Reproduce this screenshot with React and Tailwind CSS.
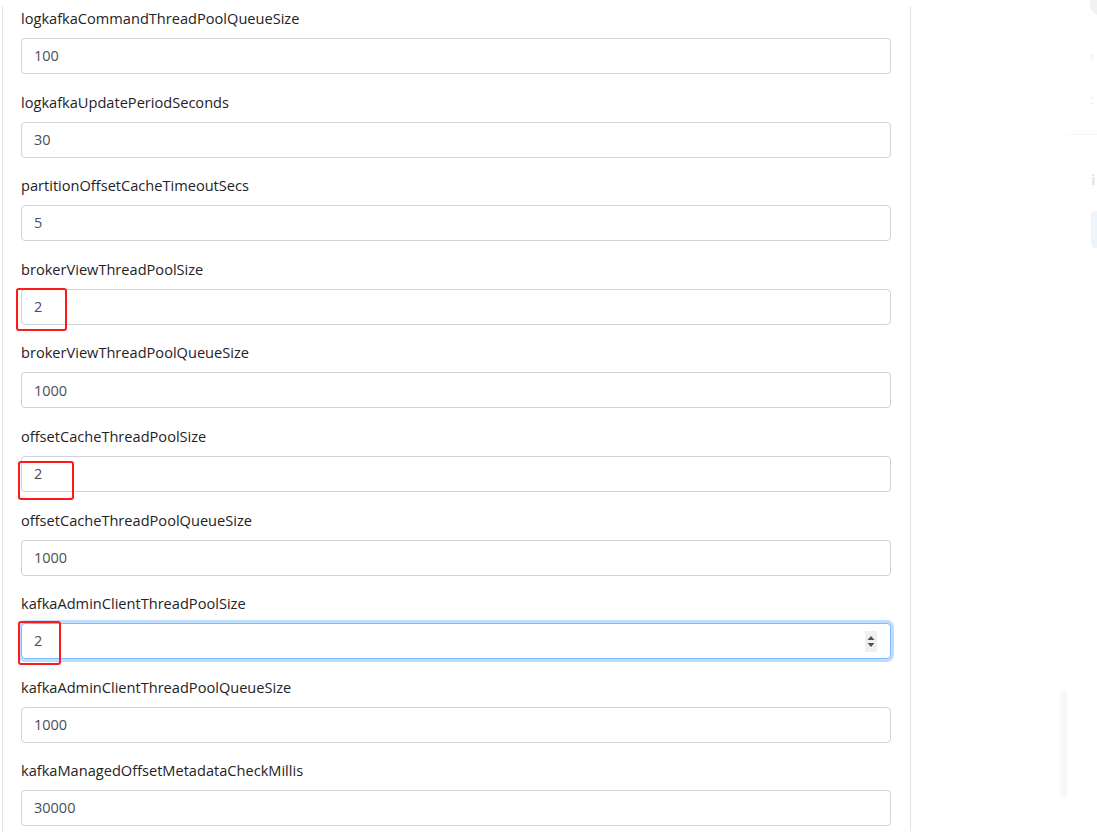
import React from 'react'

const fields = [
  { label: 'logkafkaCommandThreadPoolQueueSize', value: '100' },
  { label: 'logkafkaUpdatePeriodSeconds', value: '30' },
  { label: 'partitionOffsetCacheTimeoutSecs', value: '5' },
  { label: 'brokerViewThreadPoolSize', value: '2', mark: 'left-[-5px] top-[-1px] w-[51px] h-[43px]' },
  { label: 'brokerViewThreadPoolQueueSize', value: '1000' },
  { label: 'offsetCacheThreadPoolSize', value: '2', mark: 'left-[-3px] top-[5px] w-[56px] h-[39px]' },
  { label: 'offsetCacheThreadPoolQueueSize', value: '1000' },
  { label: 'kafkaAdminClientThreadPoolSize', value: '2', mark: 'left-[-3px] top-[-2px] w-[43px] h-[44px]', focus: true },
  { label: 'kafkaAdminClientThreadPoolQueueSize', value: '1000' },
  { label: 'kafkaManagedOffsetMetadataCheckMillis', value: '30000' },
]

const Field = ({ label, value, mark, focus }) => (
  <div className="mb-[15.6px]">
    <label className="block mb-2 h-6 leading-6 text-[14.6px] text-[#1f2326]">{label}</label>
    <div className="relative">
      <div
        className={
          focus
            ? 'h-9 rounded-[4px] border border-[#80bdff] shadow-[0_0_0_3px_rgba(0,123,255,0.25)] bg-white flex items-center px-3 text-[14.5px] text-[#495057]'
            : 'h-9 rounded-[4px] border border-[#ced4da] bg-white flex items-center px-3 text-[14.5px] text-[#495057]'
        }
      >
        <span className="flex-1">{value}</span>
        {focus && (
          <span className="w-3 h-[21px] bg-[#f0f0f0] flex items-center justify-center mr-[1px]">
            <svg width="8" height="13" viewBox="0 0 8 13">
              <path d="M4 1 L7.5 5 L0.5 5 Z" fill="#505050" />
              <path d="M4 12 L7.5 8 L0.5 8 Z" fill="#505050" />
            </svg>
          </span>
        )}
      </div>
      {mark && <div className={`absolute border-2 border-[#ff1a1a] rounded-[3px] ${mark}`} />}
    </div>
  </div>
)

export default function App() {
  return (
    <div className="w-[1097px] h-[833px] overflow-hidden bg-white flex" style={{ fontFamily: '"Open Sans", "Noto Sans", sans-serif' }}>
      <div className="w-[911px] shrink-0 pt-[8px] pl-[2px]">
        <div className="h-full border-l border-r border-[#e3e3e3] pl-[18px] pr-[19px]">
          <div className="-mt-[2px]">
            {fields.map((f) => (
              <Field key={f.label} {...f} />
            ))}
          </div>
        </div>
      </div>
      <div className="flex-1 flex">
        <div className="w-[150px] shrink-0 flex flex-col justify-end pb-[36px] pl-[149px]">
          <div className="w-[7px] h-[107px] rounded bg-[#f7f7f7] shrink-0" />
        </div>
        <div className="flex-1 border-l border-[#fbfbfb] flex flex-col">
          <div className="pl-[28px] flex flex-col items-start text-[#ececec]">
            <div className="w-6 h-[16px] rounded-b-full bg-[#f2f2f2]" />
            <div className="mt-[30px] text-[14px] leading-5">‹</div>
            <div className="mt-[24px] text-[12px] leading-5">:</div>
          </div>
          <div className="mt-[24px] ml-[4px] h-px bg-[#f6f6f6]" />
          <div className="pl-[29px] flex flex-col items-start">
            <div className="mt-[34px] text-[#e4e4e4] text-[15px] font-bold leading-5">i</div>
            <div className="mt-[22px] w-6 h-[37px] rounded-[4px] bg-[#eef4fc]" />
          </div>
        </div>
      </div>
    </div>
  )
}
